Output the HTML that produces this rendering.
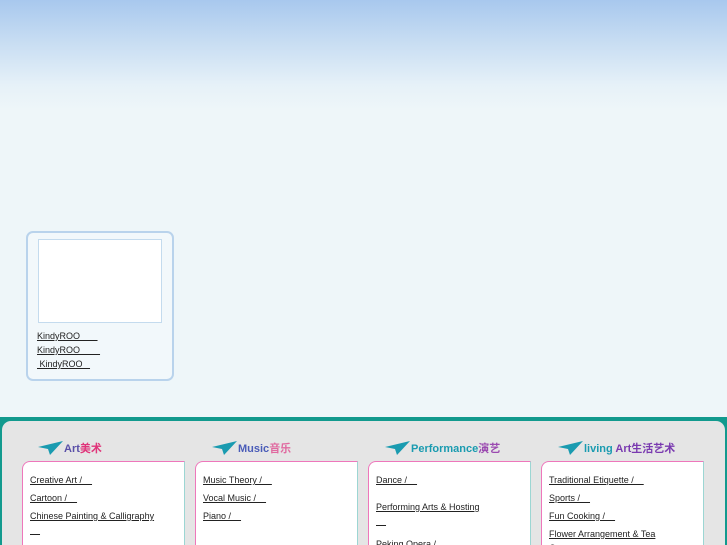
<!DOCTYPE html>
<html style="overflow:hidden;width:727px;height:545px"><head><meta charset="utf-8"><style>
*{margin:0;padding:0;box-sizing:border-box}
body{width:727px;height:545px;overflow:hidden;position:relative;font-family:"Liberation Sans","Noto Sans CJK SC",sans-serif;background:linear-gradient(#a8c8ee 0px,#c6dcf2 40px,#e6f1f8 85px,#eef6f9 110px,#eef6f9 100%)}
a{color:#222;font-size:9px;text-decoration:underline}
.card{position:absolute;left:26px;top:231px;width:148px;height:150px;border:2px solid #b9d3ec;border-radius:7px;background:#f2f8fb}
.img{position:absolute;left:10px;top:6px;width:124px;height:84px;border:1px solid #c4dbee;background:#fff}
.card a{position:absolute;left:9px}
.panel{position:absolute;left:0;top:417px;width:727px;height:128px;background:#129a8e;overflow:hidden}
.inner{position:absolute;left:2px;top:4px;right:2px;bottom:0;background:#e5e5e5;border-radius:9px 9px 0 0}
.box{position:absolute;top:461px;width:163px;height:84px;background:#fff;border:1px solid #ee77bb;border-right-color:#9cd6d3;border-bottom:none;border-radius:8px 0 0 0;overflow:hidden}
.box a{position:absolute;left:7px}
.t{position:absolute;top:440px;font-size:11px;font-weight:bold;white-space:nowrap}
.t svg{vertical-align:middle}
</style></head><body>
<div class="card"><div class="img"></div>
<a style="top:98px">KindyROO&nbsp;&nbsp;&nbsp;&nbsp;&nbsp;&nbsp;&nbsp;</a>
<a style="top:112px">KindyROO&nbsp;&nbsp;&nbsp;&nbsp;&nbsp;&nbsp;&nbsp;&nbsp;</a>
<a style="top:126px">&nbsp;KindyROO&nbsp;&nbsp;&nbsp;</a>
</div>
<div class="panel"><div class="inner"></div></div>
<div class="t" style="left:38px"><svg width="26" height="16"><path d="M0 6 L25 0 L12 14 L10 8Z" fill="#1a9bb0"/></svg><span style="color:#5a50a8">Art</span><span style="color:#e0357a">美术</span></div>
<div class="t" style="left:212px"><svg width="26" height="16"><path d="M0 6 L25 0 L12 14 L10 8Z" fill="#1a9bb0"/></svg><span style="color:#4a5cb8">Music</span><span style="color:#e06aa0">音乐</span></div>
<div class="t" style="left:385px"><svg width="26" height="16"><path d="M0 6 L25 0 L12 14 L10 8Z" fill="#1a9bb0"/></svg><span style="color:#1a9bb0">Performance</span><span style="color:#9b4ab0">演艺</span></div>
<div class="t" style="left:558px"><svg width="26" height="16"><path d="M0 6 L25 0 L12 14 L10 8Z" fill="#1a9bb0"/></svg><span style="color:#1a9bb0">living </span><span style="color:#7a3ab0">Art生活艺术</span></div>
<div class="box" style="left:22px"><a style="top:13px">Creative Art /&nbsp;&nbsp;&nbsp;&nbsp;</a><a style="top:31px">Cartoon /&nbsp;&nbsp;&nbsp;&nbsp;</a><a style="top:49px">Chinese Painting &amp; Calligraphy</a><a style="top:63px">&nbsp;&nbsp;&nbsp;&nbsp;</a></div>
<div class="box" style="left:195px"><a style="top:13px">Music Theory /&nbsp;&nbsp;&nbsp;&nbsp;</a><a style="top:31px">Vocal Music /&nbsp;&nbsp;&nbsp;&nbsp;</a><a style="top:49px">Piano /&nbsp;&nbsp;&nbsp;&nbsp;</a></div>
<div class="box" style="left:368px"><a style="top:13px">Dance /&nbsp;&nbsp;&nbsp;&nbsp;</a><a style="top:40px">Performing Arts &amp; Hosting</a><a style="top:54px">&nbsp;&nbsp;&nbsp;&nbsp;</a><a style="top:77px">Peking Opera /</a></div>
<div class="box" style="left:541px"><a style="top:13px">Traditional Etiquette /&nbsp;&nbsp;&nbsp;&nbsp;</a><a style="top:31px">Sports /&nbsp;&nbsp;&nbsp;&nbsp;</a><a style="top:49px">Fun Cooking /&nbsp;&nbsp;&nbsp;&nbsp;</a><a style="top:67px">Flower Arrangement &amp; Tea</a><a style="top:81px">Ceremony</a></div>
</body></html>
